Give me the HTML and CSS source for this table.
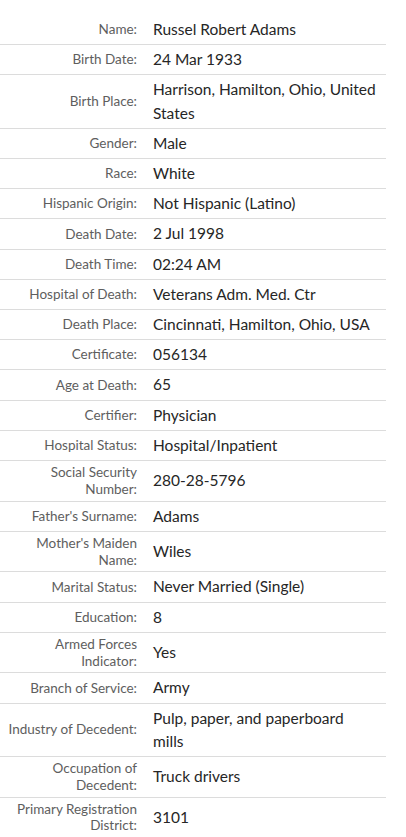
FILE: index.html
```html
<!DOCTYPE html>
<html>
<head>
<meta charset="utf-8">
<link rel="stylesheet" href="styles.css">
</head>
<body>
<table class="record">
<tbody>
<tr><th>Name:</th><td>Russel Robert Adams</td></tr>
<tr><th>Birth Date:</th><td>24 Mar 1933</td></tr>
<tr><th>Birth Place:</th><td>Harrison, Hamilton, Ohio, United States</td></tr>
<tr><th>Gender:</th><td>Male</td></tr>
<tr><th>Race:</th><td>White</td></tr>
<tr><th>Hispanic Origin:</th><td>Not Hispanic (Latino)</td></tr>
<tr><th>Death Date:</th><td>2 Jul 1998</td></tr>
<tr><th>Death Time:</th><td>02:24 AM</td></tr>
<tr><th>Hospital of Death:</th><td>Veterans Adm. Med. Ctr</td></tr>
<tr><th>Death Place:</th><td>Cincinnati, Hamilton, Ohio, USA</td></tr>
<tr><th>Certificate:</th><td>056134</td></tr>
<tr><th>Age at Death:</th><td>65</td></tr>
<tr><th>Certifier:</th><td>Physician</td></tr>
<tr><th>Hospital Status:</th><td>Hospital/Inpatient</td></tr>
<tr><th>Social Security Number:</th><td>280-28-5796</td></tr>
<tr><th>Father's Surname:</th><td>Adams</td></tr>
<tr><th>Mother's Maiden Name:</th><td>Wiles</td></tr>
<tr><th>Marital Status:</th><td>Never Married (Single)</td></tr>
<tr><th>Education:</th><td>8</td></tr>
<tr><th>Armed Forces Indicator:</th><td>Yes</td></tr>
<tr><th>Branch of Service:</th><td>Army</td></tr>
<tr><th>Industry of Decedent:</th><td>Pulp, paper, and paperboard mills</td></tr>
<tr><th>Occupation of Decedent:</th><td>Truck drivers</td></tr>
<tr><th>Primary Registration District:</th><td>3101</td></tr>
</tbody>
</table>
</body>
</html>
```

FILE: styles.css
```css
html, body {
  margin: 0;
  padding: 0;
  background: #fff;
}
body {
  padding-top: 15px;
  font-family: Lato, "Liberation Sans", sans-serif;
}
.record {
  width: 386px;
  border-collapse: collapse;
}
.record th,
.record td {
  border-bottom: 1px solid #dcdcdc;
  padding: 3px 8px;
  vertical-align: middle;
}
.record th {
  width: 129px;
  text-align: right;
  font-weight: normal;
  font-size: 13.5px;
  line-height: 16.8px;
  color: #5e5e5e;
}
.record td {
  font-size: 15.5px;
  line-height: 23.2px;
  color: #262626;
}
```
